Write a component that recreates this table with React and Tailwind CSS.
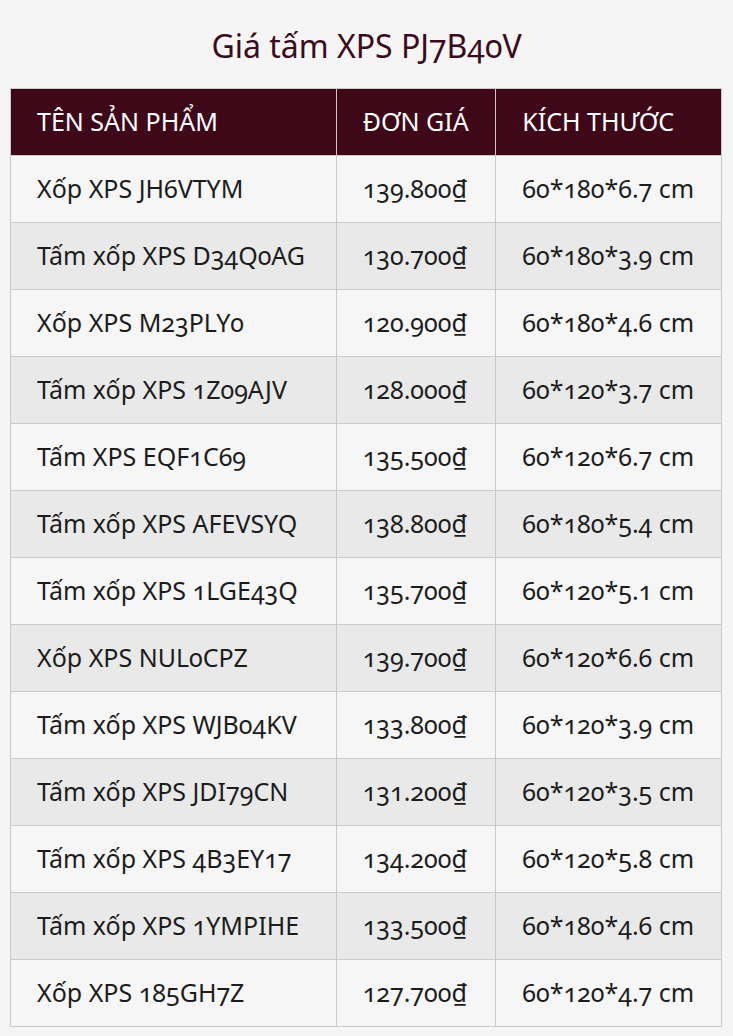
import React from 'react';

const rows = [
  ['Xốp XPS JH6VTYM', '139.800₫', '60*180*6.7 cm'],
  ['Tấm xốp XPS D34Q0AG', '130.700₫', '60*180*3.9 cm'],
  ['Xốp XPS M23PLY0', '120.900₫', '60*180*4.6 cm'],
  ['Tấm xốp XPS 1Z09AJV', '128.000₫', '60*120*3.7 cm'],
  ['Tấm XPS EQF1C69', '135.500₫', '60*120*6.7 cm'],
  ['Tấm xốp XPS AFEVSYQ', '138.800₫', '60*180*5.4 cm'],
  ['Tấm xốp XPS 1LGE43Q', '135.700₫', '60*120*5.1 cm'],
  ['Xốp XPS NUL0CPZ', '139.700₫', '60*120*6.6 cm'],
  ['Tấm xốp XPS WJB04KV', '133.800₫', '60*120*3.9 cm'],
  ['Tấm xốp XPS JDI79CN', '131.200₫', '60*120*3.5 cm'],
  ['Tấm xốp XPS 4B3EY17', '134.200₫', '60*120*5.8 cm'],
  ['Tấm xốp XPS 1YMPIHE', '133.500₫', '60*180*4.6 cm'],
  ['Xốp XPS 185GH7Z', '127.700₫', '60*120*4.7 cm'],
];

const App = () => {
  return (
    <div
      className="min-h-[1036px] w-full bg-[#f5f5f5] px-[10px] pt-[24px] oldstyle-nums"
      style={{ fontFamily: '"Noto Sans", "Open Sans", sans-serif' }}
    >
      <h1 className="text-center text-[32px] leading-[44px] text-[#3b0a1c] mb-[20px]">
        Giá tấm XPS PJ7B40V
      </h1>
      <table className="w-[712px] border-collapse text-[25px] text-[#1c1c1c]">
        <colgroup>
          <col className="w-[326px]" />
          <col className="w-[160px]" />
          <col className="w-[226px]" />
        </colgroup>
        <thead>
          <tr className="h-[67px] bg-[#3f0819] text-white">
            <th className="border border-[#c9c9c9] pl-[26px] text-left font-normal">TÊN SẢN PHẨM</th>
            <th className="border border-[#c9c9c9] pl-[26px] text-left font-normal">ĐƠN GIÁ</th>
            <th className="border border-[#c9c9c9] pl-[26px] text-left font-normal">KÍCH THƯỚC</th>
          </tr>
        </thead>
        <tbody>
          {rows.map((r, i) => (
            <tr key={i} className={`h-[67px] ${i % 2 === 0 ? 'bg-[#f6f6f6]' : 'bg-[#e9e9e9]'}`}>
              <td className="border border-[#c9c9c9] pl-[26px] whitespace-nowrap">{r[0]}</td>
              <td className="border border-[#c9c9c9] pl-[26px] whitespace-nowrap">{r[1]}</td>
              <td className="border border-[#c9c9c9] pl-[26px] whitespace-nowrap">{r[2]}</td>
            </tr>
          ))}
        </tbody>
      </table>
    </div>
  );
};

export default App;
